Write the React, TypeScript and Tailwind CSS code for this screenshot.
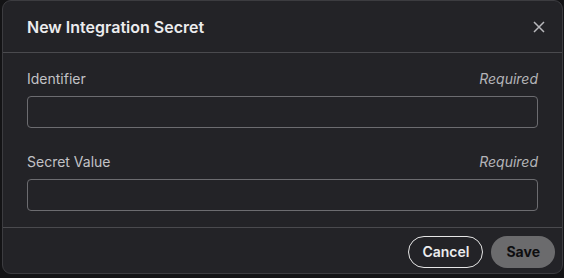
import React, { useState } from "react";

const Field: React.FC<{ label: string; value: string; onChange: (v: string) => void }> = ({
  label,
  value,
  onChange,
}) => (
  <div className="flex flex-col gap-[7px]">
    <div className="flex items-center justify-between h-5 text-sm leading-5">
      <span className="text-[#c2c2c6]">{label}</span>
      <span className="italic text-[#b4b4b8]">Required</span>
    </div>
    <input
      type="text"
      value={value}
      onChange={(e) => onChange(e.target.value)}
      className="h-8 w-full rounded-[4px] border border-[#6c6c70] bg-transparent px-2 text-sm text-[#e6e6e6] outline-none"
    />
  </div>
);

export default function App() {
  const [identifier, setIdentifier] = useState("");
  const [secret, setSecret] = useState("");

  return (
    <div
      className="h-[278px] w-[564px] overflow-hidden bg-[#131315] pl-[2px]"
      style={{ fontFamily: "Inter, 'Noto Sans', sans-serif" }}
    >
      <div className="flex h-[274px] w-[561px] flex-col rounded-[9px] border border-[#3c3c40] bg-[#232327]">
        <div className="flex h-[52px] shrink-0 items-center justify-between border-b border-[#4a4a4e] pl-6 pr-[11px]">
          <h2 className="text-base font-semibold text-[#ececee]">New Integration Secret</h2>
          <button className="flex h-6 w-6 items-center justify-center text-[#b8b8bc]">
            <svg width="14" height="14" viewBox="0 0 14 14" fill="none" stroke="currentColor" strokeWidth="1.5">
              <path d="M2 2L12 12M12 2L2 12" />
            </svg>
          </button>
        </div>

        <div className="flex flex-col gap-6 border-b border-[#4a4a4e] px-6 pt-4 pb-4">
          <Field label="Identifier" value={identifier} onChange={setIdentifier} />
          <Field label="Secret Value" value={secret} onChange={setSecret} />
        </div>

        <div className="flex flex-1 items-start justify-end gap-2 pt-2 pr-[7px]">
          <button className="h-8 rounded-full border border-[#e6e6e6] px-[13px] text-sm font-semibold text-[#ececee]">
            Cancel
          </button>
          <button className="h-8 rounded-full bg-[#6b6b6d] px-[15px] text-sm font-bold text-[#0e0e10]">
            Save
          </button>
        </div>
      </div>
    </div>
  );
}
